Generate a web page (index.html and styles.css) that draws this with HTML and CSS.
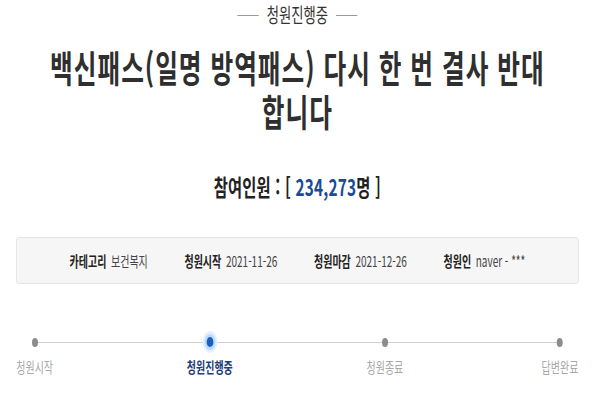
FILE: index.html
```html
<!DOCTYPE html>
<html lang="ko">
<head>
<meta charset="utf-8">
<link rel="stylesheet" href="styles.css">
</head>
<body>
<div class="viewport">
<div class="page">
  <div class="status">
    <span class="status-line"></span>
    <span class="status-text">청원진행중</span>
    <span class="status-line"></span>
  </div>
  <h1 class="title">백신패스(일명 방역패스) 다시 한 번 결사 반대<br>합니다</h1>
  <div class="count">참여인원 : [ <span class="count-num">234,273</span>명 ]</div>
  <div class="info">
    <div class="info-item"><span class="info-label">카테고리</span><span class="info-value">보건복지</span></div>
    <div class="info-item"><span class="info-label">청원시작</span><span class="info-value">2021-11-26</span></div>
    <div class="info-item"><span class="info-label">청원마감</span><span class="info-value">2021-12-26</span></div>
    <div class="info-item"><span class="info-label">청원인</span><span class="info-value">naver - ***</span></div>
  </div>
  <div class="steps">
    <div class="step"><span class="dot"></span><span class="step-label">청원시작</span></div>
    <div class="step active"><span class="dot"></span><span class="step-label">청원진행중</span></div>
    <div class="step"><span class="dot"></span><span class="step-label">청원종료</span></div>
    <div class="step"><span class="dot"></span><span class="step-label">답변완료</span></div>
  </div>
</div>
</div>
</body>
</html>
```

FILE: styles.css
```css
html, body {
  margin: 0;
  padding: 0;
  background: #ffffff;
  overflow: hidden;
}
body {
  font-family: "Noto Sans CJK KR", "Noto Sans", sans-serif;
  color: #333;
}
.viewport {
  width: 600px;
  height: 400px;
  overflow: hidden;
}
.page {
  width: 844px;
  margin-left: 24px;
  transform: scaleX(0.6667);
  transform-origin: -24px 0;
}
.status {
  display: flex;
  justify-content: center;
  align-items: center;
  gap: 12px;
  height: 30px;
}
.status-line {
  width: 32px;
  height: 1px;
  background: #9a9a9a;
}
.status-text {
  font-size: 20px;
  line-height: 30px;
  color: #333;
}
.title {
  margin: 15px 0 0;
  text-align: center;
  font-size: 37px;
  line-height: 44px;
  letter-spacing: 1.5px;
  font-weight: 700;
  color: #2f2f2f;
  white-space: nowrap;
}
.count {
  margin-top: 38px;
  text-align: center;
  font-size: 23px;
  line-height: 30px;
  letter-spacing: 0.3px;
  font-weight: 700;
  color: #222;
}
.count-num {
  color: #1a4a98;
}
.info {
  margin-top: 36px;
  height: 45px;
  border: 1px solid #e0e0e0;
  border-radius: 4px;
  background: #f6f6f6;
  display: flex;
  justify-content: center;
  align-items: center;
  gap: 55px;
}
.info-item {
  display: flex;
  align-items: center;
  gap: 7px;
  font-size: 15px;
  line-height: 20px;
}
.info-label {
  font-weight: 700;
  color: #222;
}
.info-value {
  color: #444;
}
.steps {
  position: relative;
  margin: 46px 0 0 -2px;
  width: 848px;
  display: flex;
  justify-content: space-between;
}
.steps::before {
  content: "";
  position: absolute;
  left: 30px;
  right: 30px;
  top: 12px;
  height: 1px;
  background: #cfcfcf;
}
.step {
  width: 60px;
  display: flex;
  flex-direction: column;
  align-items: center;
}
.dot {
  position: relative;
  width: 24px;
  height: 24px;
  display: flex;
  align-items: center;
  justify-content: center;
}
.dot::after {
  content: "";
  width: 9px;
  height: 9px;
  border-radius: 50%;
  background: #8c8c8c;
}
.active .dot::after {
  width: 10px;
  height: 10px;
  background: #1c5fbf;
  box-shadow: 0 0 0 3px #b8dbff, 0 0 0 6px #e2f0ff;
}
.step-label {
  margin-top: 3px;
  font-size: 15px;
  line-height: 20px;
  color: #a8a8a8;
  white-space: nowrap;
}
.active .step-label {
  font-weight: 700;
  color: #1d3e78;
}
```
